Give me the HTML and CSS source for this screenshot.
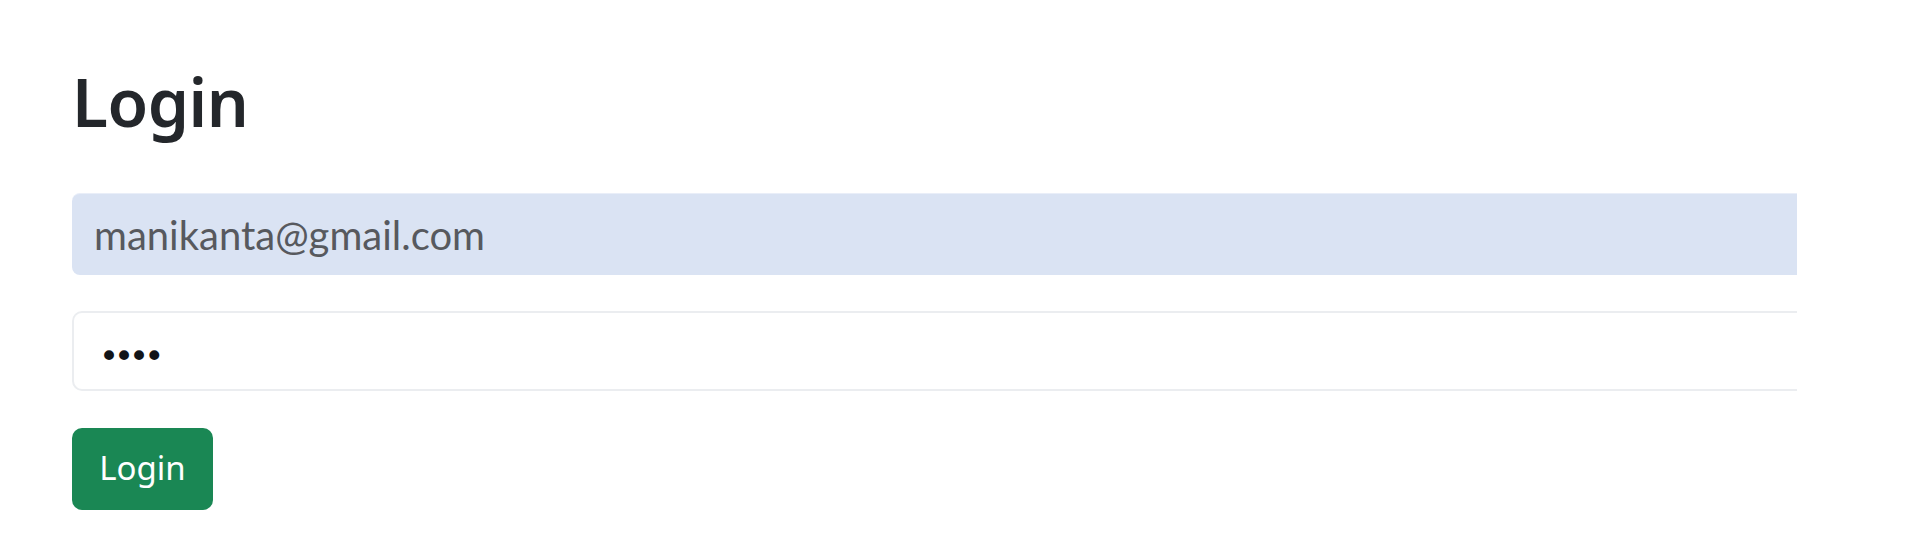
FILE: index.html
```html
<!DOCTYPE html>
<html lang="en">
<head>
<meta charset="utf-8">
<title>Login</title>
<link rel="stylesheet" href="styles.css">
</head>
<body>
<main class="page">
  <h1 class="title">Login</h1>
  <form class="login-form">
    <input class="field field-email" type="email" value="manikanta@gmail.com" aria-label="Email">
    <input class="field field-password" type="password" value="1234" aria-label="Password">
    <button class="btn-login" type="button">Login</button>
  </form>
</main>
</body>
</html>
```

FILE: styles.css
```css
html, body {
  margin: 0;
  padding: 0;
  background: #ffffff;
}

.page {
  padding: 56px 0 0 72px;
  width: 1725px;
}

.title {
  margin: 0;
  font-family: "Noto Sans", "Open Sans", sans-serif;
  font-weight: 600;
  font-size: 66px;
  line-height: 90px;
  color: #24272b;
  letter-spacing: -0.5px;
}

.login-form {
  display: flex;
  flex-direction: column;
  align-items: flex-start;
  margin-top: 47px;
}

.field {
  box-sizing: border-box;
  width: 100%;
  outline: none;
  margin: 0;
}

.field-email {
  height: 82px;
  border: none;
  border-top: 1px solid #e9eef8;
  border-radius: 8px 0 0 8px;
  background: #dae3f3;
  padding: 0 0 0 22px;
  font-family: "Lato", sans-serif;
  font-size: 40px;
  color: #57595e;
}

.field-password {
  margin-top: 36px;
  height: 80px;
  border: 2px solid #ebedf0;
  border-right: none;
  border-radius: 10px 0 0 10px;
  background: #ffffff;
  padding: 10px 0 0 25px;
  font-family: "DejaVu Sans", sans-serif;
  font-size: 34px;
  letter-spacing: -5px;
  color: #111418;
}

.btn-login {
  margin-top: 37px;
  width: 141px;
  height: 82px;
  border: none;
  border-radius: 10px;
  background: #1a8754;
  color: #ffffff;
  font-family: "Noto Sans", "Open Sans", sans-serif;
  font-size: 33px;
  padding: 0 0 4px 0;
  cursor: pointer;
}
```
